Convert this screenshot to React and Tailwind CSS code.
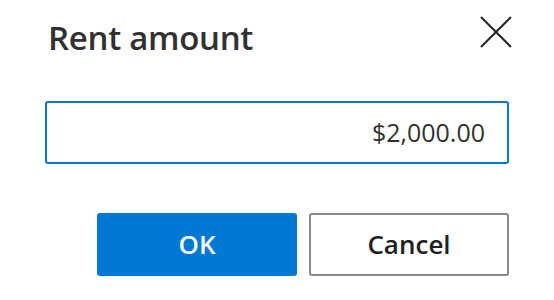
export default function App() {
  return (
    <div className="w-[554px] h-[300px] bg-white px-[45px] font-['Open_Sans',sans-serif]">
      <div className="flex items-start justify-between pt-[16px]">
        <h1 className="pl-[3px] text-[33px] leading-[44px] font-semibold text-[#323130] tracking-[-0.3px]">Rent amount</h1>
        <button className="mr-[-3px] w-[32px] h-[32px] flex items-center justify-center">
          <svg width="32" height="32" viewBox="0 0 32 32" fill="none" stroke="#252423" strokeWidth="2">
            <path d="M1 1 L31 31 M31 1 L1 31" />
          </svg>
        </button>
      </div>
      <div className="mt-[41px] h-[63px] border-2 border-[#0078d4] rounded-[3px] flex items-center justify-end pr-[22px]">
        <span className="text-[25px] text-[#323130]">$2,000.00</span>
      </div>
      <div className="mt-[49px] flex justify-end gap-[12px]">
        <button className="w-[200px] h-[63px] bg-[#0078d4] rounded-[3px] text-white text-[26px] font-semibold">OK</button>
        <button className="w-[200px] h-[63px] border-2 border-[#8a8886] rounded-[3px] text-[#201f1e] text-[26px] font-semibold">Cancel</button>
      </div>
    </div>
  );
}
